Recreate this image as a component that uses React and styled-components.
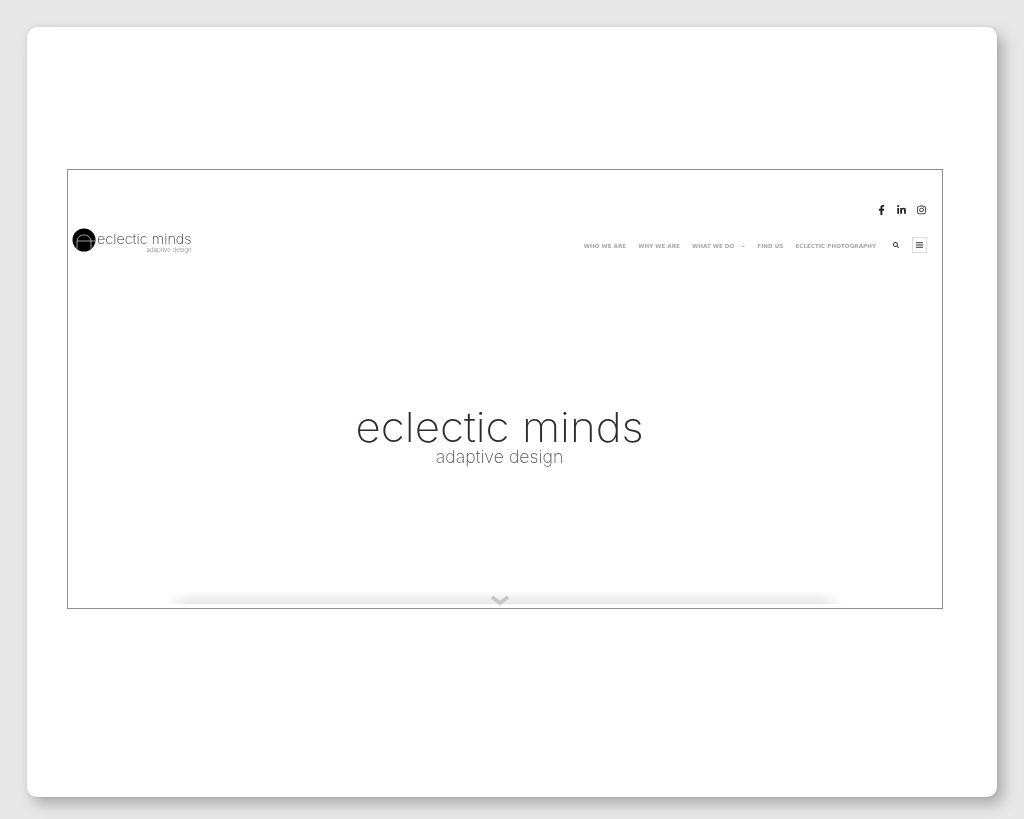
import React from 'react';
import styled, { createGlobalStyle } from 'styled-components';
import { FaFacebookF, FaLinkedinIn, FaInstagram, FaSearch } from 'react-icons/fa';

const GlobalStyle = createGlobalStyle`
  html, body { margin: 0; padding: 0; background: #e8e8e8; }
  body { font-family: "Inter", "Liberation Sans", sans-serif; }
`;

const Page = styled.div`
  box-sizing: border-box;
  width: 1024px;
  height: 819px;
  padding: 27px 27px 22px;
  overflow: hidden;
`;

const Card = styled.div`
  box-sizing: border-box;
  width: 970px;
  height: 770px;
  padding: 142px 0 0 40px;
  background: #fff;
  border-radius: 10px;
  box-shadow: 6px 7px 14px rgba(90, 85, 85, 0.42), 0 0 3px rgba(90, 85, 85, 0.15);
`;

const Frame = styled.div`
  box-sizing: border-box;
  width: 876px;
  height: 440px;
  border: 1px solid #8f8f8f;
  display: flex;
  flex-direction: column;
  position: relative;
`;

const Socials = styled.div`
  display: flex;
  justify-content: flex-end;
  align-items: center;
  gap: 11px;
  height: 14px;
  padding: 33px 16px 0 0;
  color: #222;
`;

const SocialLink = styled.span`
  display: flex;
  width: 9px;
  justify-content: center;
  font-size: 10px;
`;

const Header = styled.div`
  display: flex;
  justify-content: space-between;
  align-items: flex-start;
  padding: 11px 15px 0 4px;
`;

const Brand = styled.div`
  display: flex;
  align-items: flex-start;
  height: 24px;
  filter: blur(0.25px);
`;

const BrandText = styled.div`
  display: flex;
  flex-direction: column;
  align-items: flex-end;
  margin-left: 1px;
  padding-top: 4px;
  transform: scaleX(1.06);
  transform-origin: left center;
`;

const BrandName = styled.div`
  font-weight: 200;
  font-size: 13.6px;
  line-height: 15px;
  color: #333;
  white-space: nowrap;
`;

const BrandTag = styled.div`
  font-weight: 300;
  font-size: 5.8px;
  line-height: 5px;
  color: #888;
  white-space: nowrap;
`;

const Nav = styled.nav`
  display: flex;
  align-items: center;
  height: 16px;
  padding-top: 9px;
`;

const NavItem = styled.span`
  font-family: "DejaVu Sans", sans-serif;
  font-weight: 700;
  font-size: 5.6px;
  letter-spacing: 0.05px;
  color: #a8a8a8;
  white-space: nowrap;
  margin: 2px 0 0 12px;
  display: flex;
  align-items: center;
  filter: blur(0.2px);
`;

const Caret = styled.svg`
  width: 4px;
  height: 3px;
  margin-left: 7px;
`;

const SearchButton = styled.span`
  display: flex;
  margin-left: 17px;
  font-size: 6px;
  color: #333;
`;

const MenuButton = styled.span`
  box-sizing: border-box;
  display: flex;
  align-items: center;
  justify-content: center;
  width: 15px;
  height: 16px;
  margin-left: 13px;
  border: 1px solid #dcdcdc;
`;

const Hero = styled.div`
  flex: 1;
  display: flex;
  flex-direction: column;
  align-items: center;
  justify-content: center;
  padding: 28px 11px 0 0;
  filter: blur(0.2px);
`;

const HeroTitle = styled.h1`
  margin: 0;
  font-weight: 170;
  font-size: 41px;
  line-height: 42px;
  transform: scaleX(1.07);
  color: #2d2d2d;
  white-space: nowrap;
`;

const HeroTagline = styled.div`
  font-weight: 200;
  font-size: 17.7px;
  line-height: 18px;
  color: #555;
  white-space: nowrap;
`;

const ShadeBar = styled.div`
  width: 680px;
  height: 14px;
  margin: 0 auto 4px;
  background: linear-gradient(to bottom, rgba(235, 235, 235, 0), #e8e8e8);
  mask-image: linear-gradient(to right, transparent, #000 24px, #000 calc(100% - 24px), transparent);
`;

const ScrollChevron = styled.svg`
  position: absolute;
  left: 422px;
  bottom: 2px;
  width: 20px;
  height: 11px;
`;

function Logo() {
  return (
    <svg width="24" height="24" viewBox="0 0 24 24">
      <circle cx="12" cy="12" r="11.5" fill="#000" />
      <path d="M5 21V14C5 9.5 8 7 12 7S19 9.5 19 14V21M5 13H23" fill="none" stroke="#dedede" strokeWidth="0.7" />
    </svg>
  );
}

export default function App() {
  return (
    <Page>
      <GlobalStyle />
      <Card>
        <Frame>
          <Socials>
            <SocialLink><FaFacebookF /></SocialLink>
            <SocialLink><FaLinkedinIn /></SocialLink>
            <SocialLink><FaInstagram /></SocialLink>
          </Socials>
          <Header>
            <Brand>
              <Logo />
              <BrandText>
                <BrandName>eclectic minds</BrandName>
                <BrandTag>adaptive design</BrandTag>
              </BrandText>
            </Brand>
            <Nav>
              <NavItem>WHO WE ARE</NavItem>
              <NavItem>WHY WE ARE</NavItem>
              <NavItem>
                WHAT WE DO
                <Caret viewBox="0 0 4 3">
                  <path d="M0.5 0.5L2 2L3.5 0.5" fill="none" stroke="#999" strokeWidth="0.8" />
                </Caret>
              </NavItem>
              <NavItem>FIND US</NavItem>
              <NavItem>ECLECTIC PHOTOGRAPHY</NavItem>
              <SearchButton><FaSearch /></SearchButton>
              <MenuButton>
                <svg width="7" height="6" viewBox="0 0 7 6">
                  <path d="M0 0.75H7M0 3H7M0 5.25H7" stroke="#333" strokeWidth="1" />
                </svg>
              </MenuButton>
            </Nav>
          </Header>
          <Hero>
            <HeroTitle>eclectic minds</HeroTitle>
            <HeroTagline>adaptive design</HeroTagline>
          </Hero>
          <ShadeBar />
          <ScrollChevron viewBox="0 0 20 11">
            <path d="M2 2L10 8L18 2" fill="none" stroke="#c8c8c8" strokeWidth="4" />
          </ScrollChevron>
        </Frame>
      </Card>
    </Page>
  );
}
